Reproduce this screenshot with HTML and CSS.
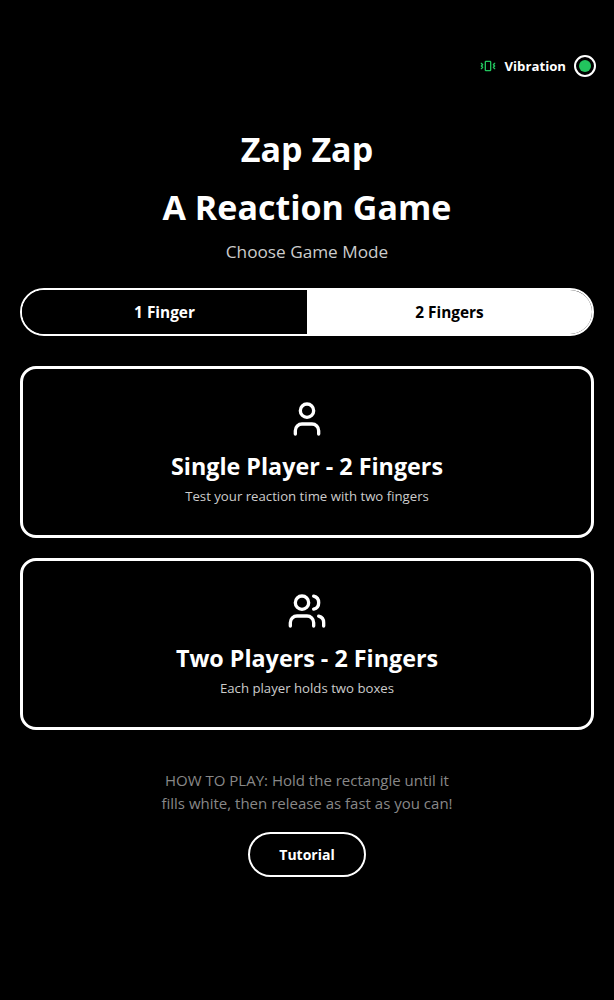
FILE: index.html
```html
<!DOCTYPE html>
<html lang="en">
<head>
<meta charset="utf-8">
<title>Zap Zap</title>
<link rel="stylesheet" href="styles.css">
</head>
<body>
<main class="page">
  <div class="vibration">
    <svg class="vib-icon" viewBox="0 0 24 24" fill="none" stroke="currentColor" stroke-width="2" stroke-linecap="round" stroke-linejoin="round"><path d="m2 8 2 2-2 2 2 2-2 2"/><path d="m22 8-2 2 2 2-2 2 2 2"/><rect x="8" y="5" width="8" height="14" rx="1"/></svg>
    <span class="vib-label">Vibration</span>
    <span class="vib-toggle"><span class="vib-dot"></span></span>
  </div>
  <h1 class="title">Zap Zap</h1>
  <h1 class="title">A Reaction Game</h1>
  <p class="subtitle">Choose Game Mode</p>
  <div class="segment">
    <div class="seg-item">1 Finger</div>
    <div class="seg-item seg-active">2 Fingers</div>
  </div>
  <section class="card">
    <svg class="card-icon" viewBox="0 0 24 24" fill="none" stroke="currentColor" stroke-width="2" stroke-linecap="round" stroke-linejoin="round"><path d="M19 21v-2a4 4 0 0 0-4-4H9a4 4 0 0 0-4 4v2"/><circle cx="12" cy="7" r="4"/></svg>
    <h2 class="card-title">Single Player - 2 Fingers</h2>
    <p class="card-desc">Test your reaction time with two fingers</p>
  </section>
  <section class="card">
    <svg class="card-icon" viewBox="0 0 24 24" fill="none" stroke="currentColor" stroke-width="2" stroke-linecap="round" stroke-linejoin="round"><path d="M16 21v-2a4 4 0 0 0-4-4H6a4 4 0 0 0-4 4v2"/><circle cx="9" cy="7" r="4"/><path d="M22 21v-2a4 4 0 0 0-3-3.87"/><path d="M16 3.13a4 4 0 0 1 0 7.75"/></svg>
    <h2 class="card-title">Two Players - 2 Fingers</h2>
    <p class="card-desc">Each player holds two boxes</p>
  </section>
  <p class="howto">HOW TO PLAY: Hold the rectangle until it<br>fills white, then release as fast as you can!</p>
  <button class="tutorial">Tutorial</button>
</main>
</body>
</html>
```
FILE: styles.css
```css
* { box-sizing: border-box; }
html, body { margin: 0; background: #000; }
body { font-family: "Open Sans", "Noto Sans", sans-serif; color: #fff; }
.page { height: 1000px; padding: 54px 20px 0; display: flex; flex-direction: column; align-items: center; }
.vibration { align-self: flex-end; display: flex; align-items: center; height: 24px; margin-right: -2px; }
.vib-icon { width: 16px; height: 16px; color: #22c55e; margin-right: 9px; }
.vib-label { font-size: 13.2px; font-weight: 700; margin-right: 8px; }
.vib-toggle { width: 22px; height: 22px; border: 2px solid #fff; border-radius: 50%; display: flex; align-items: center; justify-content: center; }
.vib-dot { width: 12px; height: 12px; border-radius: 50%; background: #22c55e; }
.title { margin: 0; font-size: 34px; line-height: 58px; font-weight: 700; text-align: center; }
.title:first-of-type { margin-top: 42px; }
.subtitle { margin: 3px 0 0; font-size: 17.2px; line-height: 26px; color: #ccc; }
.segment { width: 100%; height: 48px; margin-top: 23px; border: 2px solid #fff; border-radius: 24px; display: flex; overflow: hidden; }
.seg-item { flex: 1; display: flex; align-items: center; justify-content: center; font-size: 15.4px; font-weight: 700; background: #000; color: #fff; }
.seg-active { background: #fff; color: #000; }
.card { width: 100%; height: 172px; margin-bottom: 20px; border: 3px solid #fff; border-radius: 16px; padding-top: 30px; display: flex; flex-direction: column; align-items: center; }
.segment + .card { margin-top: 30px; }
.card-icon { width: 40px; height: 40px; }
.card-title { margin: 9px 0 0; font-size: 23.3px; line-height: 36px; font-weight: 700; }
.card-desc { margin: 3px 0 0; font-size: 13.2px; line-height: 18px; color: #ccc; }
.howto { margin: 19px 0 0; font-size: 15px; line-height: 23px; color: #888; text-align: center; }
.tutorial { margin-top: 17px; width: 118px; height: 45px; background: #000; color: #fff; border: 2px solid #fff; border-radius: 23px; font: 700 14px "Open Sans", "Noto Sans", sans-serif; }
```
